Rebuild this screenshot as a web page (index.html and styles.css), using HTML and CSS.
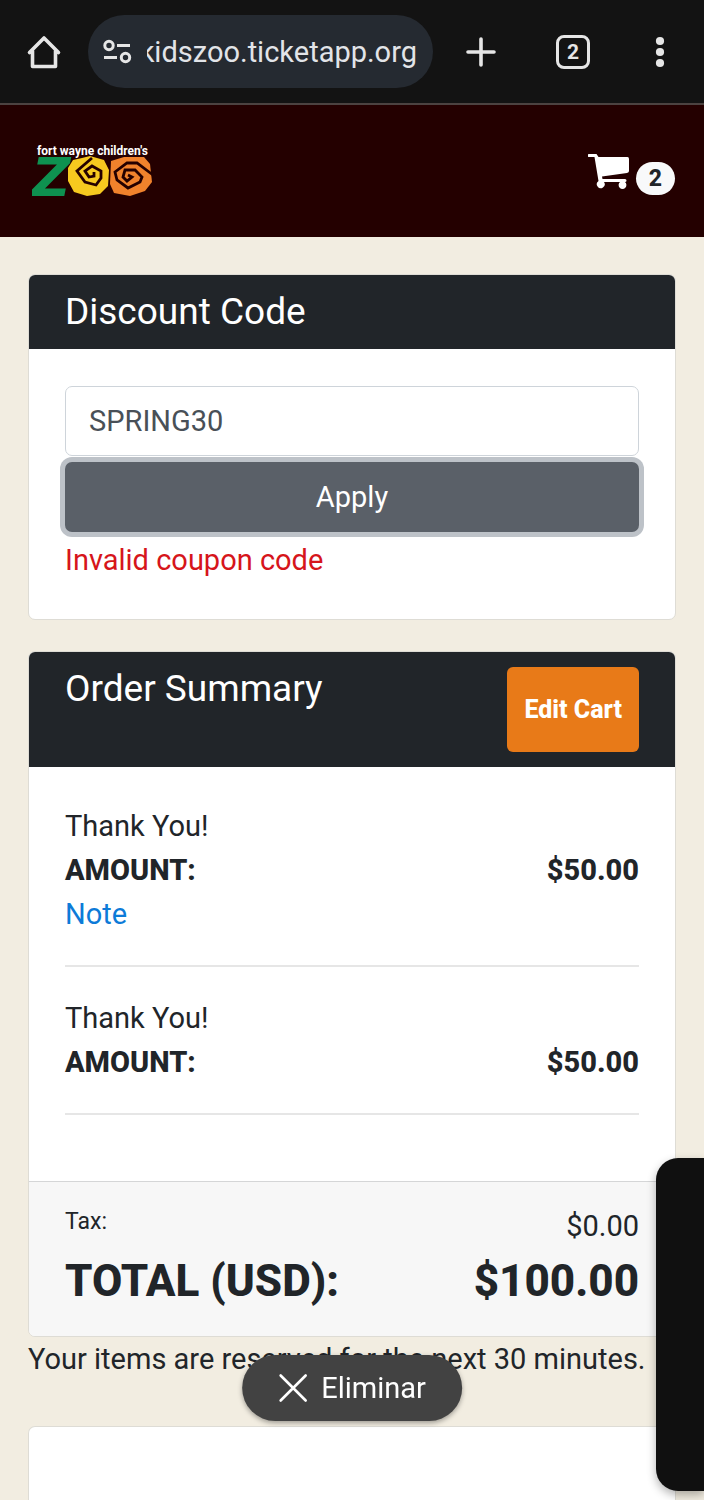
FILE: index.html
```html
<!DOCTYPE html>
<html lang="en">
<head>
<meta charset="utf-8">
<meta name="viewport" content="width=device-width, initial-scale=1">
<title>Fort Wayne Children's Zoo – Cart</title>
<link rel="stylesheet" href="styles.css">
</head>
<body>
<div class="browser-bar">
  <button class="bar-button" type="button" aria-label="Home">
    <svg width="36" height="36" viewBox="0 0 36 36" fill="none" stroke="#e6e6e6" stroke-width="3.6" stroke-linejoin="round" stroke-linecap="round"><path d="M3.500 18.500 18 4l14.500 14.500M6.500 17v15.500h23V17" /></svg>
  </button>
  <div class="address">
    <svg class="address-icon" width="30" height="26" viewBox="0 0 30 26" fill="none" stroke="#e6e6e6" stroke-width="3"><circle cx="6" cy="6.500" r="4.200"/><path d="M14 6.500h13M1 18.500h13"/><circle cx="22.500" cy="18.500" r="4.200"/></svg>
    <div class="address-clip"><span>kidszoo.ticketapp.org</span></div>
  </div>
  <button class="bar-button bar-new" type="button" aria-label="New tab">
    <svg width="32" height="32" viewBox="0 0 32 32" stroke="#e6e6e6" stroke-width="3.600" stroke-linecap="round"><path d="M16 3v26M3 16h26"/></svg>
  </button>
  <button class="bar-button bar-tabs" type="button" aria-label="2 open tabs"><span class="tab-count">2</span></button>
  <button class="bar-button bar-menu" type="button" aria-label="Menu">
    <svg width="10" height="32" viewBox="0 0 10 32" fill="#e6e6e6"><circle cx="5" cy="5" r="4.100"/><circle cx="5" cy="16" r="4.100"/><circle cx="5" cy="27" r="4.100"/></svg>
  </button>
</div>

<header class="site-header">
  <a class="logo" href="#" aria-label="Fort Wayne Children's Zoo">
    <svg width="124" height="56" viewBox="0 0 124 56">
      <text class="logo-z" x="0" y="53">Z</text>
      <path fill="#f6c91f" d="M36 25 41 17l9-2 8-2 14 4 5 10-1 16-8 8-13 2-13-4-6-11z"/>
      <path fill="#f0822c" d="M79 18l13-4 20 0 6 7 2 18-7 9-15 5-16-3-4-9z"/>
      <path fill="none" stroke="#240000" stroke-width="2.800" d="M60 15 45 28l8 11 11 3 5-7v-7l-9-5-7 5 4 6 5-1v-4"/>
      <path fill="none" stroke="#240000" stroke-width="2.800" d="M121 32 105 20H95L83 29l2 8 11 8 12-6 2-5-7-7H93l-2 7 4 4 5-4-4-2"/>
      <text class="logo-name" x="5" y="12">fort wayne children's</text>
    </svg>
  </a>
  <a class="cart" href="#" aria-label="Cart, 2 items">
    <svg width="42" height="36" viewBox="0 0 42 36" fill="#fff"><path d="M1 0h7.500l2 3h29q1.500 0 1.500 2v12q0 1.500-2 2L14 22.500l.5 2.500H37q1.500 0 1.500 1.500T37 28a3.900 3.900 0 1 1-5 0H16a3.900 3.900 0 1 1-5.500-1L6.500 3H1Q-.5 3-.5 1.500T1 0z"/></svg>
    <span class="cart-count">2</span>
  </a>
</header>

<main class="content">
  <section class="card">
    <div class="card-header"><h2 class="card-title">Discount Code</h2></div>
    <form class="card-body discount">
      <input class="code-input" type="text" value="SPRING30" aria-label="Discount code">
      <button class="apply" type="button">Apply</button>
      <p class="error">Invalid coupon code</p>
    </form>
  </section>

  <section class="card">
    <div class="card-header"><h2 class="card-title">Order Summary</h2><button class="edit" type="button">Edit Cart</button></div>
    <div class="card-body items">
      <div class="item">
        <p>Thank You!</p>
        <p class="row strong"><span>AMOUNT:</span><span>$50.00</span></p>
        <p><a class="note" href="#">Note</a></p>
      </div>
      <div class="item">
        <p>Thank You!</p>
        <p class="row strong"><span>AMOUNT:</span><span>$50.00</span></p>
      </div>
    </div>
    <div class="card-footer">
      <p class="row"><span class="tax">Tax:</span><span>$0.00</span></p>
      <p class="row total"><span>TOTAL (USD):</span><span>$100.00</span></p>
    </div>
  </section>
  <p class="reserved">Your items are reserved for the next 30 minutes.</p>
  <section class="card card-next"></section>
</main>

<aside class="side-panel"></aside>
<button class="dismiss" type="button">
  <svg width="30" height="30" viewBox="0 0 30 30" stroke="#fff" stroke-width="2.600" stroke-linecap="round"><path d="M2.500 2.500l25 25M27.500 2.500l-25 25"/></svg>
  <span>Eliminar</span>
</button>
</body>
</html>
```

FILE: styles.css
```css
* { box-sizing: border-box; }

body {
  margin: 0;
  height: 100vh;
  overflow: hidden;
  display: flex;
  flex-direction: column;
  background: #f2ede1;
  color: #212529;
  font: 29px/44px Roboto, sans-serif;
}

h2, p { margin: 0; }
button { font: inherit; border: 0; cursor: pointer; }
svg { display: block; flex: none; }

.browser-bar {
  display: flex;
  align-items: center;
  flex: none;
  height: 105px;
  padding: 0 39px 0 26px;
  background: #131313;
  border-bottom: 2px solid #4c4341;
}

.bar-button { display: flex; flex: none; padding: 0; background: none; color: #e6e6e6; }
.bar-new { margin-left: 32px; }
.bar-tabs { margin-left: 59px; }
.bar-menu { margin-left: 65px; }

.address {
  display: flex;
  align-items: center;
  flex: 1;
  min-width: 0;
  height: 73px;
  margin-left: 26px;
  padding: 0 16px 0 15px;
  gap: 14px;
  border-radius: 37px;
  background: #252a31;
  color: #e2e4e8;
}

.address-clip {
  display: flex;
  justify-content: flex-end;
  flex: 1;
  min-width: 0;
  overflow: hidden;
  white-space: nowrap;
}

.tab-count {
  width: 34px;
  height: 34px;
  border: 3px solid #e6e6e6;
  border-radius: 8px;
  font-size: 21px;
  font-weight: 700;
  line-height: 28px;
  text-align: center;
}

.site-header {
  display: flex;
  align-items: center;
  justify-content: space-between;
  flex: none;
  height: 132px;
  padding: 0 29px 0 32px;
  background: #240000;
}

.logo-z { font: italic 700 53px "DejaVu Sans", sans-serif; fill: #0e9150; }
.logo-name { font: 700 12px Roboto, sans-serif; fill: #fff; }

.cart { display: flex; gap: 6px; padding-top: 7px; text-decoration: none; }
.cart-count {
  height: 33px;
  margin-top: 8px;
  padding: 0 13px;
  border-radius: 17px;
  background: #f8f9fa;
  color: #212529;
  font-size: 23px;
  font-weight: 800;
  line-height: 33px;
}

.content {
  display: flex;
  flex-direction: column;
  flex: 1;
  padding: 37px 28px 0;
}

.card {
  flex: none;
  margin-bottom: 31px;
  border: 1px solid #dedcd5;
  border-radius: 7px;
  background: #fff;
  overflow: hidden;
}

.card-header {
  display: flex;
  align-items: flex-start;
  justify-content: space-between;
  padding: 15px 36px;
  background: #212529;
  color: #fff;
}
.card-title { font-size: 37px; font-weight: 400; line-height: 44px; }

.edit {
  height: 85px;
  padding: 0 17px;
  border-radius: 6px;
  background: #e87a18;
  color: #fff;
  font-size: 25px;
  font-weight: 800;
}

.card-body { padding: 37px 36px; }
.discount { display: flex; flex-direction: column; gap: 6px; }

.code-input {
  width: 100%;
  height: 70px;
  padding: 0 23px;
  border: 1px solid #ced4da;
  border-radius: 7px;
  background: #fff;
  color: #495057;
  font: inherit;
}

.apply {
  height: 70px;
  border-radius: 7px;
  background: #5a6068;
  color: #fff;
  box-shadow: 0 0 0 5px #bdc2c8;
}
.error { color: #d6151b; }

.items { padding-bottom: 66px; }
.item { padding-bottom: 29px; border-bottom: 2px solid #e6e6e6; }
.item + .item { padding-top: 29px; }
.row { display: flex; justify-content: space-between; }
.strong { font-weight: 800; }
.note { color: #0d7bd8; text-decoration: none; }

.card-footer {
  padding: 22px 36px;
  border-top: 1px solid #d5d6d7;
  background: #f7f7f7;
}
.tax { font-size: 23px; line-height: 36px; }
.total { font-size: 44px; font-weight: 800; line-height: 66px; }

.reserved { flex: none; margin: -31px 0 45px; white-space: nowrap; }
.card-next { flex: 1; margin: 0; border-bottom: 0; border-radius: 7px 7px 0 0; }

.side-panel {
  position: fixed;
  right: 0;
  bottom: 9px;
  width: 48px;
  height: 333px;
  border-radius: 22px 0 0 22px;
  background: #101010;
  box-shadow: 0 4px 10px rgba(0, 0, 0, .3);
}

.dismiss {
  position: fixed;
  left: 50%;
  bottom: 79px;
  transform: translateX(-50%);
  display: flex;
  align-items: center;
  gap: 13px;
  height: 66px;
  padding: 0 36px;
  border-radius: 33px;
  background: #424242;
  color: #fff;
  box-shadow: 0 2px 5px rgba(0, 0, 0, .35);
}
```
